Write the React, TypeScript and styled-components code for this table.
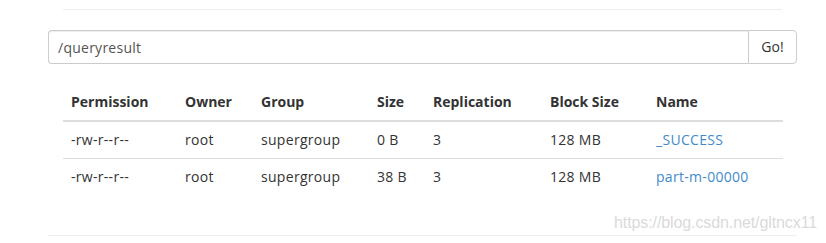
import styled, { createGlobalStyle } from "styled-components";

type FileEntry = {
  permission: string
  owner: string
  group: string
  size: string
  replication: number
  blockSize: string
  name: string
}

const files: FileEntry[] = [
  { permission: "-rw-r--r--", owner: "root", group: "supergroup", size: "0 B", replication: 3, blockSize: "128 MB", name: "_SUCCESS" },
  { permission: "-rw-r--r--", owner: "root", group: "supergroup", size: "38 B", replication: 3, blockSize: "128 MB", name: "part-m-00000" },
]

const columns = [
  { title: "Permission", width: 114 },
  { title: "Owner", width: 76 },
  { title: "Group", width: 116 },
  { title: "Size", width: 56 },
  { title: "Replication", width: 117 },
  { title: "Block Size", width: 106 },
  { title: "Name", width: 135 },
]

const GlobalStyle = createGlobalStyle`
  html, body {
    margin: 0;
    padding: 0;
    background: #fff;
  }
  body {
    font-family: "Open Sans", "Noto Sans", Arial, sans-serif;
    font-size: 14px;
    line-height: 1.42857;
    color: #333;
  }
`

const Page = styled.div`
  position: relative;
  width: 826px;
  height: 243px;
  overflow: hidden;
`

const Container = styled.div`
  width: 749px;
  margin-left: 48px;
  padding-top: 9px;
`

const Rule = styled.hr<{ $inset?: boolean }>`
  margin: 0 ${p => (p.$inset ? "15px" : "0")};
  border: 0;
  border-top: 1px solid #eee;
`

const InputGroup = styled.div`
  display: flex;
  margin-top: 20px;
  height: 34px;
`

const PathInput = styled.input`
  flex: 1;
  box-sizing: border-box;
  height: 34px;
  padding: 6px 12px 6px 9px;
  font: inherit;
  letter-spacing: 0.25px;
  color: #555;
  border: 1px solid #ccc;
  border-right: 0;
  border-radius: 4px 0 0 4px;
  box-shadow: inset 0 1px 1px rgba(0, 0, 0, 0.075);
  outline: none;
`

const GoButton = styled.button`
  box-sizing: border-box;
  width: 49px;
  height: 34px;
  padding: 6px 0;
  font: inherit;
  color: #333;
  background: #fff;
  border: 1px solid #ccc;
  border-radius: 0 4px 4px 0;
`

const Table = styled.table`
  width: 720px;
  margin: 20px 15px 40px;
  border-collapse: collapse;
  table-layout: fixed;

  th, td {
    padding: 8px;
    text-align: left;
    vertical-align: top;
  }
  th {
    font-weight: 700;
    border-bottom: 2px solid #ddd;
  }
  td {
    letter-spacing: 0.3px;
    border-top: 1px solid #ddd;
  }
  tbody tr:first-child td {
    border-top: 0;
  }
`

const FileLink = styled.a`
  color: #428bca;
  text-decoration: none;
`

const Watermark = styled.div`
  position: absolute;
  left: 614px;
  top: 212px;
  font-family: "Liberation Sans", Arial, sans-serif;
  font-size: 16px;
  color: #dadada;
  letter-spacing: -0.1px;
  white-space: nowrap;
`

export default function App() {
  return <>
    <GlobalStyle />
    <Page>
      <Container>
        <Rule $inset />
        <InputGroup>
          <PathInput defaultValue="/queryresult" />
          <GoButton>Go!</GoButton>
        </InputGroup>
        <Table>
          <colgroup>
            {columns.map(c => <col key={c.title} style={{ width: c.width }} />)}
          </colgroup>
          <thead>
            <tr>
              {columns.map(c => <th key={c.title}>{c.title}</th>)}
            </tr>
          </thead>
          <tbody>
            {files.map(f => (
              <tr key={f.name}>
                <td>{f.permission}</td>
                <td>{f.owner}</td>
                <td>{f.group}</td>
                <td>{f.size}</td>
                <td>{f.replication}</td>
                <td>{f.blockSize}</td>
                <td><FileLink href="#">{f.name}</FileLink></td>
              </tr>
            ))}
          </tbody>
        </Table>
        <Rule />
      </Container>
      <Watermark>https://blog.csdn.net/gltncx11</Watermark>
    </Page>
  </>
}
